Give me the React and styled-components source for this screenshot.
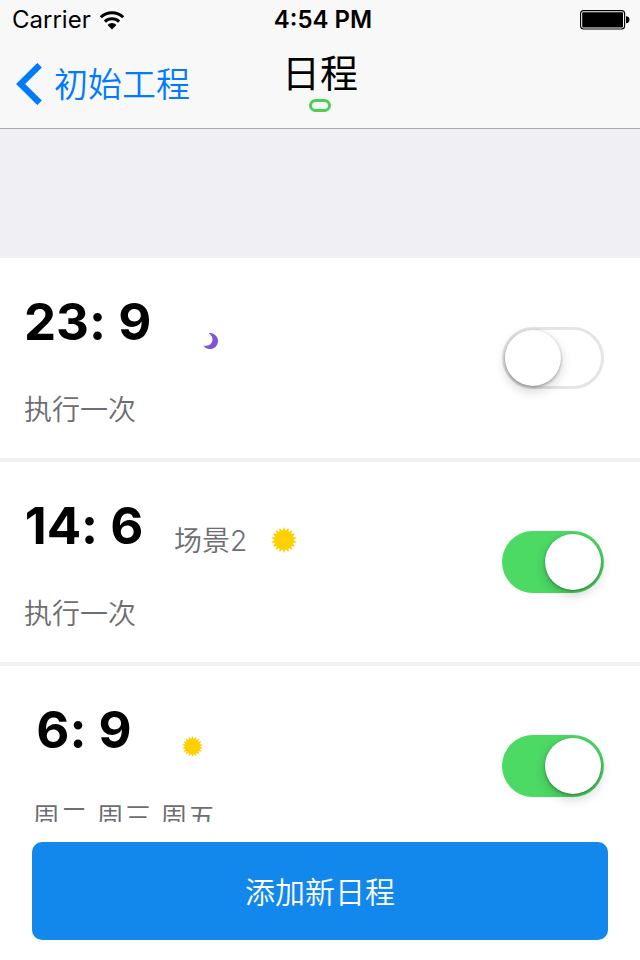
import React, { useState } from "react";
import styled, { createGlobalStyle } from "styled-components";

const initialSchedules = [
  {
    id: 1,
    time: "23: 9",
    scene: "",
    repeat: "执行一次",
    icon: "moon",
    iconSize: 16,
    iconGap: 52,
    enabled: false,
  },
  {
    id: 2,
    time: "14: 6",
    scene: "场景2",
    repeat: "执行一次",
    icon: "sun",
    iconSize: 26,
    iconGap: 24,
    enabled: true,
  },
  {
    id: 3,
    time: "6: 9",
    scene: "",
    repeat: "周二 周三 周五",
    indent: true,
    icon: "sun",
    iconSize: 21,
    iconGap: 38,
    enabled: true,
  },
];

// star with 18 rays
const sunPoints = Array.from({ length: 36 }, (_, i) => {
  const r = i % 2 === 0 ? 50 : 36;
  const a = (i * Math.PI) / 18;
  return `${(50 + r * Math.sin(a)).toFixed(1)},${(
    50 -
    r * Math.cos(a)
  ).toFixed(1)}`;
}).join(" ");

const SunIcon = ({ size }) => (
  <svg width={size} height={size} viewBox="0 0 100 100" aria-hidden="true">
    <polygon points={sunPoints} fill="#ffd000" />
  </svg>
);

const MoonIcon = ({ size }) => (
  <svg width={size} height={size} viewBox="0 0 16 16" aria-hidden="true">
    <path
      d="M5.5 0.2 A8 8 0 1 1 0.3 12.4 C3.6 13.4 7.4 12.4 8.9 9.2 C10.3 5.9 9.2 2 5.5 0.2 Z"
      fill="#8055d8"
    />
  </svg>
);

const WifiIcon = () => (
  <svg width="26" height="20" viewBox="0 0 26 20" aria-hidden="true">
    <g fill="none" stroke="#000" strokeWidth="3">
      <path d="M1.8 7.2 A16 16 0 0 1 24.2 7.2" />
      <path d="M5.9 11.7 A10.2 10.2 0 0 1 20.1 11.7" />
    </g>
    <path d="M13 19.4 L8.6 15 A6 6 0 0 1 17.4 15 Z" />
  </svg>
);

const BatteryIcon = () => (
  <svg width="50" height="20" viewBox="0 0 50 20" aria-label="电量">
    <rect x="0.6" y="0.6" width="44" height="18.4" rx="3" fill="none" stroke="#000" strokeWidth="1.1" />
    <rect x="2.2" y="2.2" width="40.8" height="15.2" rx="1" />
    <path d="M46 6.2 A3.4 3.4 0 0 1 46 13.2 Z" />
  </svg>
);

const BackIcon = () => (
  <svg width="26" height="42" viewBox="0 0 26 42" aria-hidden="true">
    <path d="M23.6 2.2 L4.6 21 L23.6 39.8" fill="none" stroke="#007aff" strokeWidth="6.4" />
  </svg>
);

const App = () => {
  const [schedules, setSchedules] = useState(initialSchedules);

  const toggleHandler = (id) => {
    setSchedules(
      schedules.map((el) =>
        el.id === id ? { ...el, enabled: !el.enabled } : el
      )
    );
  };

  return (
    <>
      <GlobalStyle />
      <Screen>
        <Header>
          <StatusBar>
            <Carrier>
              Carrier
              <WifiIcon />
            </Carrier>
            <Clock>4:54 PM</Clock>
            <Battery>
              <BatteryIcon />
            </Battery>
          </StatusBar>
          <NavBar>
            <BackLink href="#">
              <BackIcon />
              <BackText>初始工程</BackText>
            </BackLink>
            <TitleBox>
              <Title>日程</Title>
              <Indicator />
            </TitleBox>
          </NavBar>
        </Header>
        <Content>
          <List>
            {schedules.map((el) => (
              <Row key={el.id}>
                <Info>
                  <TopLine>
                    <Time id={`time-${el.id}`}>{el.time}</Time>
                    {el.scene && <Scene>{el.scene}</Scene>}
                    <IconBox $gap={el.iconGap}>
                      {el.icon === "sun" ? (
                        <SunIcon size={el.iconSize} />
                      ) : (
                        <MoonIcon size={el.iconSize} />
                      )}
                    </IconBox>
                  </TopLine>
                  <Repeat $indent={el.indent}>{el.repeat}</Repeat>
                </Info>
                <Switch
                  type="checkbox"
                  role="switch"
                  aria-labelledby={`time-${el.id}`}
                  checked={el.enabled}
                  onChange={() => toggleHandler(el.id)}
                />
              </Row>
            ))}
          </List>
        </Content>
        <Footer>
          <AddButton type="button">添加新日程</AddButton>
        </Footer>
      </Screen>
    </>
  );
};

export default App;

const GlobalStyle = createGlobalStyle`
  * {
    box-sizing: border-box;
  }
  body {
    margin: 0;
    background-color: #fff;
    color: #000;
    font-family: Inter, "Noto Sans CJK SC", sans-serif;
  }
  svg {
    display: block;
    flex-shrink: 0;
  }
`;

const Screen = styled.div`
  display: flex;
  flex-direction: column;
  height: 100vh;
`;

const Header = styled.header`
  background-color: #f8f8f8;
  border-bottom: 1px solid #a7a7ab;
`;

const StatusBar = styled.div`
  display: grid;
  grid-template-columns: 1fr auto 1fr;
  align-items: center;
  height: 40px;
  padding: 0 10px 0 12px;
  font-size: 24px;
  line-height: 40px;
`;

const Carrier = styled.div`
  display: flex;
  align-items: center;
  gap: 8px;
`;

const Clock = styled.div`
  padding-left: 4px;
  font-weight: 600;
`;

const Battery = styled.div`
  justify-self: end;
`;

const NavBar = styled.nav`
  display: grid;
  grid-template-columns: 1fr auto 1fr;
  align-items: center;
  height: 88px;
  padding: 0 16px;
`;

const BackLink = styled.a`
  display: flex;
  align-items: center;
  gap: 12px;
  color: #007aff;
  text-decoration: none;
`;

const BackText = styled.span`
  padding-top: 2px;
  font-size: 34px;
  font-weight: 350;
  line-height: 40px;
`;

const TitleBox = styled.div`
  display: flex;
  flex-direction: column;
  align-items: center;
  gap: 4px;
  padding-bottom: 6px;
`;

const Title = styled.h1`
  margin: 0;
  font-size: 38px;
  font-weight: 400;
  line-height: 44px;
`;

const Indicator = styled.span`
  width: 22px;
  height: 13px;
  border: 3px solid #4cd050;
  border-radius: 7px;
`;

const Content = styled.main`
  flex: 1;
  min-height: 0;
  padding-top: 129px;
  overflow: hidden;
  background-color: #efeff4;
`;

const List = styled.ul`
  display: flex;
  flex-direction: column;
  gap: 4px;
  margin: 0;
  padding: 0;
  list-style: none;
`;

const Row = styled.li`
  display: flex;
  align-items: center;
  justify-content: space-between;
  height: 200px;
  padding: 0 36px 0 24px;
  background-color: #fff;
`;

const Info = styled.div`
  display: flex;
  flex-direction: column;
  gap: 36px;
  padding-top: 4px;
`;

const TopLine = styled.div`
  display: flex;
  align-items: flex-end;
`;

const Time = styled.span`
  min-width: 120px;
  font-size: 51px;
  font-weight: 700;
  font-feature-settings: "calt" 0;
  line-height: 64px;
  text-align: center;
`;

const Scene = styled.span`
  margin-left: 30px;
  color: #6d6d72;
  font-size: 28px;
  font-weight: 350;
  line-height: 34px;
`;

const IconBox = styled.span`
  margin-left: ${(props) => props.$gap}px;
  padding-bottom: 5px;
`;

const Repeat = styled.span`
  padding-left: ${(props) => (props.$indent ? 8 : 0)}px;
  color: #6d6d72;
  font-size: 28px;
  font-weight: 350;
  line-height: 40px;
`;

const Switch = styled.input`
  appearance: none;
  display: flex;
  flex-shrink: 0;
  justify-content: ${(props) => (props.checked ? "flex-end" : "flex-start")};
  width: 102px;
  height: 62px;
  margin: 0;
  padding: ${(props) => (props.checked ? 3 : 0)}px;
  border: ${(props) => (props.checked ? "none" : "3px solid #e5e5e5")};
  border-radius: 31px;
  background-color: ${(props) => (props.checked ? "#4cd964" : "#fff")};
  cursor: pointer;

  &::before {
    content: "";
    width: 56px;
    height: 56px;
    border-radius: 50%;
    background-color: #fff;
    box-shadow: 0 5px 12px rgba(0, 0, 0, 0.18), 0 1px 3px rgba(0, 0, 0, 0.35);
  }
`;

const Footer = styled.footer`
  padding: 20px 32px;
  background-color: #fff;
`;

const AddButton = styled.button`
  width: 100%;
  height: 98px;
  padding: 0 0 3px;
  border: none;
  border-radius: 10px;
  background-color: #1287ec;
  color: #fff;
  font-family: inherit;
  font-size: 30px;
  font-weight: 350;
  cursor: pointer;
`;
